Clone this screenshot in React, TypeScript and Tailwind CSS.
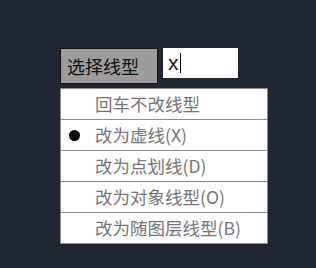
import React from 'react';

const items = [
  { label: '回车不改线型', checked: false },
  { label: '改为虚线(X)', checked: true },
  { label: '改为点划线(D)', checked: false },
  { label: '改为对象线型(O)', checked: false },
  { label: '改为随图层线型(B)', checked: false },
];

export default function App() {
  return (
    <div
      className="w-[316px] h-[268px] bg-[#212731] pt-[48px] pl-[60px]"
      style={{ fontFamily: '"Noto Sans CJK SC", "Liberation Sans", sans-serif' }}
    >
      <div className="flex items-start gap-[5px]">
        <div className="w-[98px] h-[36px] border border-[#111] bg-[#9c9c9c] text-[18px] leading-[34px] text-[#111] pl-[6px]">
          选择线型
        </div>
        <div className="w-[75px] h-[30px] bg-white flex items-center pl-[5px] text-[20px] text-[#111]">
          <span style={{ fontFamily: '"Noto Sans", sans-serif' }}>x</span>
          <span className="w-[1.5px] h-[20px] bg-black ml-[1px]" />
        </div>
      </div>
      <div className="mt-[4px] w-[208px] border border-[#8c8c8c] bg-white">
        {items.map((it, i) => (
          <div
            key={i}
            className={`h-[30px] flex items-center text-[17.5px] text-[#767676] ${i > 0 ? 'border-t border-[#8c8c8c] h-[31px]' : ''}`}
          >
            <div className="w-[26px] mr-[8px] flex justify-center">
              {it.checked && <div className="w-[11px] h-[11px] rounded-full bg-black" />}
            </div>
            <span className="whitespace-nowrap">{it.label}</span>
          </div>
        ))}
      </div>
    </div>
  );
}
